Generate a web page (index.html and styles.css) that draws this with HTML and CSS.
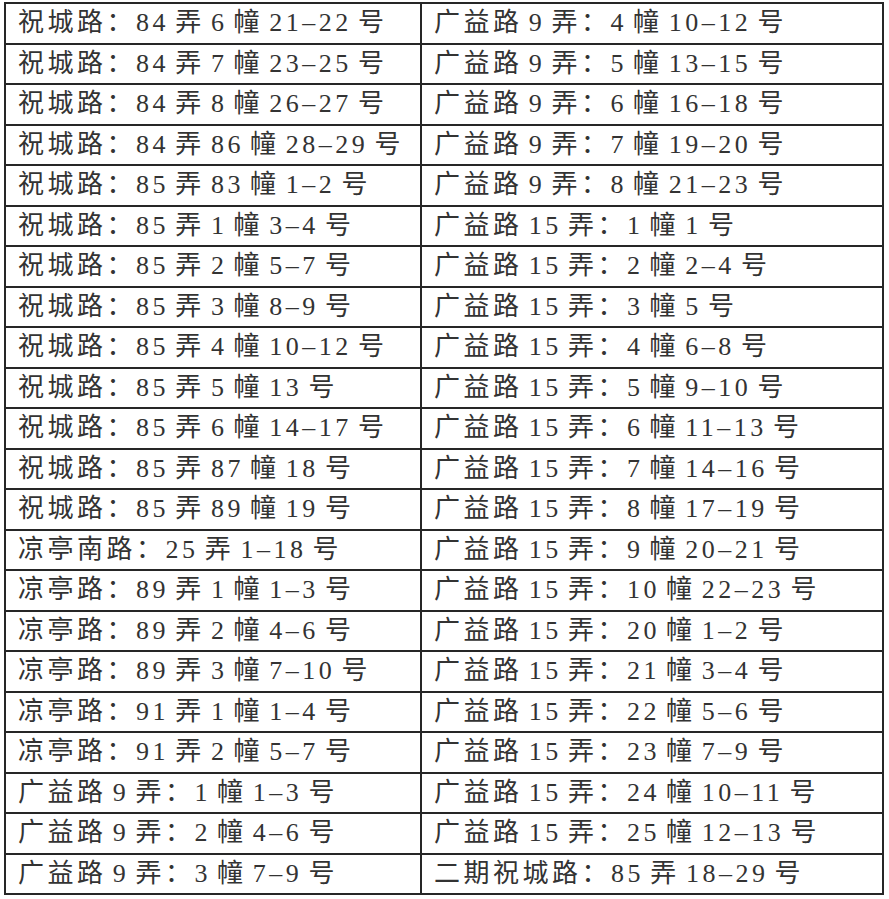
FILE: index.html
```html
<!DOCTYPE html>
<html lang="zh-CN">
<head>
<meta charset="utf-8">
<title>地址列表</title>
<link rel="stylesheet" href="styles.css">
</head>
<body>
<table class="addr">
<tr><td>祝城路：84 弄 6 幢 21–22 号</td><td>广益路 9 弄：4 幢 10–12 号</td></tr>
<tr><td>祝城路：84 弄 7 幢 23–25 号</td><td>广益路 9 弄：5 幢 13–15 号</td></tr>
<tr><td>祝城路：84 弄 8 幢 26–27 号</td><td>广益路 9 弄：6 幢 16–18 号</td></tr>
<tr><td>祝城路：84 弄 86 幢 28–29 号</td><td>广益路 9 弄：7 幢 19–20 号</td></tr>
<tr><td>祝城路：85 弄 83 幢 1–2 号</td><td>广益路 9 弄：8 幢 21–23 号</td></tr>
<tr><td>祝城路：85 弄 1 幢 3–4 号</td><td>广益路 15 弄：1 幢 1 号</td></tr>
<tr><td>祝城路：85 弄 2 幢 5–7 号</td><td>广益路 15 弄：2 幢 2–4 号</td></tr>
<tr><td>祝城路：85 弄 3 幢 8–9 号</td><td>广益路 15 弄：3 幢 5 号</td></tr>
<tr><td>祝城路：85 弄 4 幢 10–12 号</td><td>广益路 15 弄：4 幢 6–8 号</td></tr>
<tr><td>祝城路：85 弄 5 幢 13 号</td><td>广益路 15 弄：5 幢 9–10 号</td></tr>
<tr><td>祝城路：85 弄 6 幢 14–17 号</td><td>广益路 15 弄：6 幢 11–13 号</td></tr>
<tr><td>祝城路：85 弄 87 幢 18 号</td><td>广益路 15 弄：7 幢 14–16 号</td></tr>
<tr><td>祝城路：85 弄 89 幢 19 号</td><td>广益路 15 弄：8 幢 17–19 号</td></tr>
<tr><td>凉亭南路：25 弄 1–18 号</td><td>广益路 15 弄：9 幢 20–21 号</td></tr>
<tr><td>凉亭路：89 弄 1 幢 1–3 号</td><td>广益路 15 弄：10 幢 22–23 号</td></tr>
<tr><td>凉亭路：89 弄 2 幢 4–6 号</td><td>广益路 15 弄：20 幢 1–2 号</td></tr>
<tr><td>凉亭路：89 弄 3 幢 7–10 号</td><td>广益路 15 弄：21 幢 3–4 号</td></tr>
<tr><td>凉亭路：91 弄 1 幢 1–4 号</td><td>广益路 15 弄：22 幢 5–6 号</td></tr>
<tr><td>凉亭路：91 弄 2 幢 5–7 号</td><td>广益路 15 弄：23 幢 7–9 号</td></tr>
<tr><td>广益路 9 弄：1 幢 1–3 号</td><td>广益路 15 弄：24 幢 10–11 号</td></tr>
<tr><td>广益路 9 弄：2 幢 4–6 号</td><td>广益路 15 弄：25 幢 12–13 号</td></tr>
<tr><td>广益路 9 弄：3 幢 7–9 号</td><td>二期祝城路：85 弄 18–29 号</td></tr>
</table>
</body>
</html>
```
FILE: styles.css
```css
html, body {
  margin: 0;
  padding: 0;
  background: #ffffff;
}

body {
  padding: 2px 0 0 4px;
}

.addr {
  border-collapse: collapse;
  table-layout: fixed;
  width: 880px;
  font-family: "Liberation Serif", "Noto Sans CJK SC", serif;
  font-weight: 400;
  font-size: 26px;
  letter-spacing: 3.5px;
  word-spacing: -3.8px;
  color: #333333;
}

.addr td {
  border: 2px solid #262626;
  height: 38.5px;
  padding: 0 0 0 12px;
  line-height: 1;
  white-space: nowrap;
  overflow: hidden;
  vertical-align: middle;
}

.addr td:first-child {
  width: 402px;
}
```
